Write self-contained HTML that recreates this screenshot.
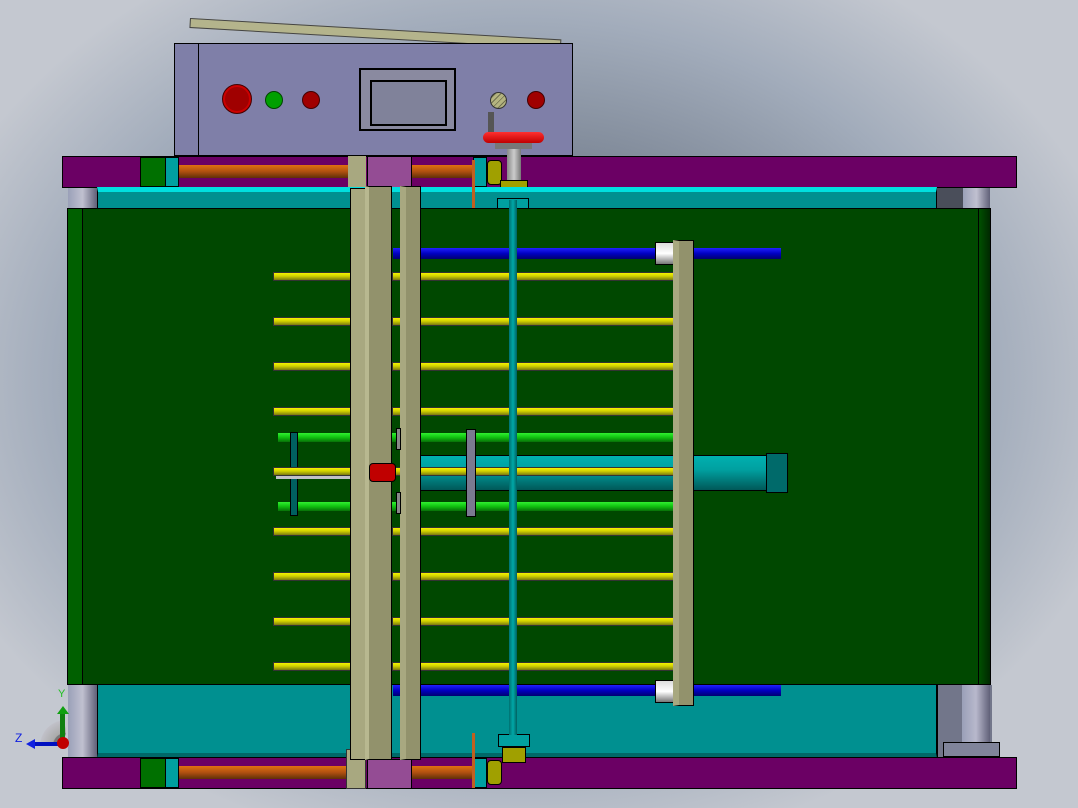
<!DOCTYPE html>
<html><head><meta charset="utf-8"><style>
body{margin:0;width:1078px;height:808px;overflow:hidden;position:relative;
background:radial-gradient(ellipse 620px 480px at 520px 380px,#5e6672 0%,#7d8796 45%,#a2acbb 75%,#c4c8d0 100%);font-family:"Liberation Sans",sans-serif}
div{position:absolute;box-sizing:border-box}
.b{border:1px solid #000}
.y{background:linear-gradient(#f4f400,#d0d000 45%,#7a7a10);height:9px;border:1px solid #333}
.g{background:linear-gradient(#30f030,#10c010 50%,#087008);height:9px}
.bl{background:linear-gradient(#2020ff,#0000c0 50%,#000070);height:11px}
.or{background:linear-gradient(#e07010,#b05010 50%,#603008);height:13px}
.c{border-radius:50%;border:1px solid #400}
</style></head><body>
<!-- lid -->
<div style="left:190px;top:18px;width:372px;height:10px;background:#b4b48c;border:1px solid #444;transform-origin:0 0;transform:rotate(3.3deg)"></div>
<!-- control box -->
<div class="b" style="left:174px;top:43px;width:399px;height:113px;background:#7f7fa8"></div>
<div style="left:198px;top:44px;width:1px;height:111px;background:#000"></div>
<div class="c" style="left:222px;top:84px;width:30px;height:30px;background:#a00000;box-shadow:inset 0 0 0 2px #c00"></div>
<div class="c" style="left:265px;top:91px;width:18px;height:18px;background:#00a000;border-color:#040"></div>
<div class="c" style="left:302px;top:91px;width:18px;height:18px;background:#a00000"></div>
<div class="b" style="left:359px;top:68px;width:97px;height:63px;background:#8a8aa0;border-width:2px"></div>
<div class="b" style="left:370px;top:80px;width:77px;height:46px;background:#80829a;border-width:2px"></div>
<div class="c" style="left:490px;top:92px;width:17px;height:17px;background:repeating-linear-gradient(135deg,#b4b480 0 3px,#707050 3px 4px);border-color:#333"></div>
<div style="left:488px;top:112px;width:6px;height:22px;background:#555"></div>
<div class="c" style="left:527px;top:91px;width:18px;height:18px;background:#a00000"></div>
<!-- purple top -->
<div class="b" style="left:62px;top:156px;width:955px;height:32px;background:#6b0064"></div>
<div class="b" style="left:140px;top:157px;width:26px;height:30px;background:#007000"></div>
<div class="b" style="left:165px;top:157px;width:14px;height:30px;background:#00a0a0"></div>
<div class="or" style="left:179px;top:165px;width:172px"></div>
<div style="left:348px;top:156px;width:18px;height:32px;background:#a8a880"></div>
<div class="b" style="left:367px;top:156px;width:45px;height:32px;background:#944c94"></div>
<div class="or" style="left:412px;top:165px;width:62px"></div>
<div class="b" style="left:473px;top:157px;width:14px;height:30px;background:#00a0a0"></div>
<div class="b" style="left:487px;top:160px;width:15px;height:25px;background:#a0a000;border-radius:4px"></div>
<!-- handwheel -->
<div style="left:507px;top:140px;width:14px;height:40px;background:linear-gradient(90deg,#888,#ccc,#777)"></div>
<div style="left:483px;top:132px;width:61px;height:11px;background:linear-gradient(#ff3030,#c00000);border-radius:6px"></div>
<div style="left:495px;top:143px;width:37px;height:6px;background:#777"></div>
<div class="b" style="left:500px;top:180px;width:28px;height:18px;background:#a0a000"></div>
<!-- teal top strip -->
<div class="b" style="left:97px;top:187px;width:840px;height:22px;background:#009090;border-top:5px solid #00e0e0"></div>
<div style="left:68px;top:188px;width:29px;height:21px;background:linear-gradient(90deg,#9aa0b8,#c0c0d0,#606078)"></div>
<div style="left:937px;top:188px;width:26px;height:21px;background:#4a4e5a"></div>
<div style="left:963px;top:188px;width:27px;height:21px;background:linear-gradient(90deg,#9aa0b8,#c0c0d0,#606078)"></div>
<div class="b" style="left:497px;top:198px;width:32px;height:13px;background:#00a0a0"></div>
<div style="left:472px;top:160px;width:3px;height:52px;background:#c06020"></div>
<div style="left:472px;top:209px;width:30px;height:3px;background:#c06020"></div>
<!-- green area -->
<div class="b" style="left:67px;top:208px;width:924px;height:477px;background:#004800"></div>
<div style="left:68px;top:209px;width:15px;height:475px;background:#006000;border-right:1px solid #000"></div>
<div style="left:978px;top:209px;width:12px;height:475px;background:linear-gradient(90deg,#005000,#002800);border-left:1px solid #000"></div>
<!-- bottom teal -->
<div class="b" style="left:97px;top:684px;width:840px;height:74px;background:#009090;border-bottom:5px solid #006868"></div>
<div style="left:68px;top:685px;width:29px;height:72px;background:linear-gradient(90deg,#9aa0b8,#c0c0d0,#606078)"></div>
<div style="left:937px;top:685px;width:55px;height:72px;background:#72768a;border-left:1px solid #000"></div>
<div style="left:962px;top:685px;width:28px;height:57px;background:linear-gradient(90deg,#9aa0b8,#b8b8cc,#606078)"></div>
<div class="b" style="left:943px;top:742px;width:57px;height:15px;background:#80849a"></div>
<!-- purple bottom -->
<div class="b" style="left:62px;top:757px;width:955px;height:32px;background:#6b0064"></div>
<div class="b" style="left:140px;top:758px;width:26px;height:30px;background:#007000"></div>
<div class="b" style="left:165px;top:758px;width:14px;height:30px;background:#00a0a0"></div>
<div class="or" style="left:179px;top:766px;width:172px"></div>
<div style="left:346px;top:749px;width:20px;height:40px;background:#a8a880;border:1px solid #333"></div>
<div class="b" style="left:367px;top:759px;width:45px;height:30px;background:#944c94"></div>
<div class="or" style="left:412px;top:766px;width:62px"></div>
<div class="b" style="left:473px;top:758px;width:14px;height:30px;background:#00a0a0"></div>
<div class="b" style="left:487px;top:760px;width:15px;height:25px;background:#a0a000;border-radius:4px"></div>
<div class="b" style="left:498px;top:734px;width:32px;height:13px;background:#00a0a0"></div>
<div class="b" style="left:502px;top:747px;width:24px;height:16px;background:#a0a000"></div>
<div style="left:472px;top:733px;width:3px;height:55px;background:#c06020"></div>
<!-- blue rods -->
<div class="bl" style="left:393px;top:248px;width:388px"></div>
<div class="bl" style="left:393px;top:685px;width:388px"></div>
<div class="b" style="left:655px;top:242px;width:24px;height:23px;background:linear-gradient(#ddd,#fff,#777)"></div>
<div class="b" style="left:655px;top:680px;width:24px;height:23px;background:linear-gradient(#ddd,#fff,#777)"></div>
<!-- cylinder -->
<div class="b" style="left:420px;top:455px;width:348px;height:36px;background:linear-gradient(#00b0b0,#00a0a0 40%,#005858)"></div>
<div class="b" style="left:766px;top:453px;width:22px;height:40px;background:#006a6a"></div>
<!-- green rods -->
<div class="g" style="left:278px;top:433px;width:397px"></div>
<div class="g" style="left:278px;top:502px;width:397px"></div>
<div class="b" style="left:290px;top:432px;width:8px;height:84px;background:#006060"></div>
<div style="left:276px;top:467px;width:80px;height:12px;background:#c0c0c8"></div>
<!-- yellow rods -->
<div class="y" style="left:273px;top:272px;width:86px"></div><div class="y" style="left:392px;top:272px;width:287px"></div>
<div class="y" style="left:273px;top:317px;width:86px"></div><div class="y" style="left:392px;top:317px;width:287px"></div>
<div class="y" style="left:273px;top:362px;width:86px"></div><div class="y" style="left:392px;top:362px;width:287px"></div>
<div class="y" style="left:273px;top:407px;width:86px"></div><div class="y" style="left:392px;top:407px;width:287px"></div>
<div class="y" style="left:273px;top:467px;width:86px"></div><div class="y" style="left:392px;top:467px;width:287px"></div>
<div class="y" style="left:273px;top:527px;width:86px"></div><div class="y" style="left:392px;top:527px;width:287px"></div>
<div class="y" style="left:273px;top:572px;width:86px"></div><div class="y" style="left:392px;top:572px;width:287px"></div>
<div class="y" style="left:273px;top:617px;width:86px"></div><div class="y" style="left:392px;top:617px;width:287px"></div>
<div class="y" style="left:273px;top:662px;width:86px"></div><div class="y" style="left:392px;top:662px;width:287px"></div>
<!-- rails -->
<div class="b" style="left:350px;top:188px;width:16px;height:572px;background:#a8a880"></div>
<div class="b" style="left:365px;top:186px;width:27px;height:574px;background:#92926c;border-left:4px solid #b8b890"></div>
<div class="b" style="left:400px;top:186px;width:21px;height:574px;background:#92926c;border-left:6px solid #a8a880"></div>
<div class="b" style="left:673px;top:240px;width:21px;height:466px;background:#92926c;border-left:6px solid #a8a880"></div>
<div class="b" style="left:369px;top:463px;width:27px;height:19px;background:#c00000;border-radius:4px"></div>
<div class="b" style="left:396px;top:428px;width:5px;height:22px;background:#888"></div>
<div class="b" style="left:396px;top:492px;width:5px;height:22px;background:#888"></div>
<!-- gray bracket -->
<div class="b" style="left:466px;top:429px;width:10px;height:88px;background:#7a7a90"></div>
<!-- teal shaft -->
<div style="left:509px;top:200px;width:8px;height:535px;background:linear-gradient(90deg,#007070,#00a8a8,#006060)"></div>
<!-- triad -->
<div style="left:36px;top:716px;width:30px;height:30px;border-radius:50%;background:radial-gradient(circle at 100% 100%,#777 30%,#aaa 32%,#c0c0c8 60%,transparent 62%)"></div>
<div style="left:60px;top:711px;width:5px;height:30px;background:#108010"></div>
<div style="left:57px;top:706px;width:0;height:0;border-left:6px solid transparent;border-right:6px solid transparent;border-bottom:8px solid #10a010"></div>
<div style="left:58px;top:688px;font-size:11px;color:#20c020">Y</div>
<div style="left:34px;top:742px;width:28px;height:4px;background:#0010c0"></div>
<div style="left:26px;top:739px;width:0;height:0;border-top:5px solid transparent;border-bottom:5px solid transparent;border-right:9px solid #1020e0"></div>
<div style="left:15px;top:731px;font-size:12px;color:#1020e0">Z</div>
<div style="left:57px;top:737px;width:12px;height:12px;border-radius:50%;background:#c00000"></div>
</body></html>
